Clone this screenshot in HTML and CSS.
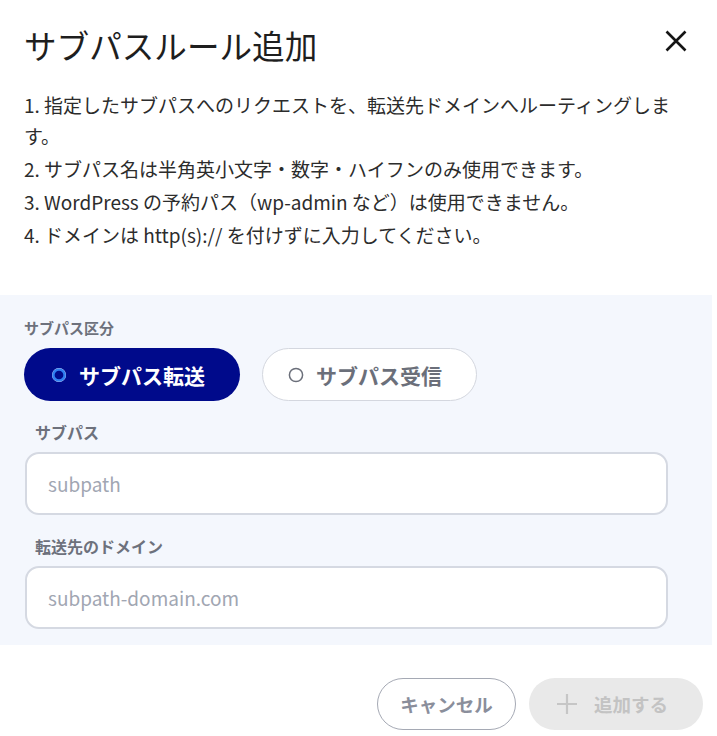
FILE: index.html
```html
<!DOCTYPE html>
<html lang="ja">
<head>
<meta charset="utf-8">
<title>サブパスルール追加</title>
<link rel="stylesheet" href="styles.css">
</head>
<body>
<div class="modal">
  <div class="header">
    <h1 class="title">サブパスルール追加</h1>
    <button class="close" aria-label="閉じる">
      <svg width="22" height="22" viewBox="0 0 22 22"><path d="M1.5 1.5 L20.5 20.5 M20.5 1.5 L1.5 20.5" stroke="#151515" stroke-width="2.6" fill="none"/></svg>
    </button>
  </div>
  <ol class="notes">
    <li>1. 指定したサブパスへのリクエストを、転送先ドメインへルーティングします。</li>
    <li>2. サブパス名は半角英小文字・数字・ハイフンのみ使用できます。</li>
    <li>3. WordPress の予約パス（wp-admin など）は使用できません。</li>
    <li>4. ドメインは http(s):// を付けずに入力してください。</li>
  </ol>
  <div class="panel">
    <div class="group-label">サブパス区分</div>
    <div class="radios">
      <div class="pill pill-on">
        <svg class="dot" width="16" height="16" viewBox="0 0 16 16"><circle cx="8" cy="8" r="7" fill="#dfe9ff"/><circle cx="8" cy="8" r="5.6" fill="#000b8c" stroke="#2f7ff0" stroke-width="2.5"/></svg>
        <span>サブパス転送</span>
      </div>
      <div class="pill pill-off">
        <svg class="dot" width="16" height="16" viewBox="0 0 16 16"><circle cx="8" cy="8" r="6.6" fill="#fff" stroke="#6b6f7a" stroke-width="1.5"/></svg>
        <span>サブパス受信</span>
      </div>
    </div>
    <div class="field">
      <div class="field-label">サブパス</div>
      <div class="input">subpath</div>
    </div>
    <div class="field">
      <div class="field-label">転送先のドメイン</div>
      <div class="input">subpath-domain.com</div>
    </div>
  </div>
  <div class="footer">
    <button class="btn btn-cancel">キャンセル</button>
    <button class="btn btn-add">
      <svg width="22" height="22" viewBox="0 0 22 22"><path d="M11 1 V21 M1 11 H21" stroke="#c6c6c6" stroke-width="2.2" fill="none"/></svg>
      <span>追加する</span>
    </button>
  </div>
</div>
</body>
</html>
```
FILE: styles.css
```css
* { box-sizing: border-box; }
html, body {
  margin: 0;
  padding: 0;
  background: #ffffff;
}
body {
  font-family: "Noto Sans CJK JP", "Noto Sans", sans-serif;
  color: #2a2a2a;
}
.modal {
  width: 717px;
}
.header {
  display: flex;
  justify-content: space-between;
  align-items: flex-start;
  padding: 21px 30px 0 24px;
}
.title {
  margin: 0;
  font-size: 32.6px;
  font-weight: 400;
  line-height: 48px;
  color: #1e1e1e;
}
.close {
  border: 0;
  background: none;
  padding: 0;
  width: 22px;
  height: 22px;
  display: flex;
  margin-top: 9px;
}
.notes {
  list-style: none;
  margin: 20px 0 0;
  padding: 0 24px;
  font-size: 19px;
  line-height: 31px;
  color: #2c2c2c;
}
.notes li {
  margin-bottom: 2px;
}
.panel {
  margin-top: 45px;
  width: 712px;
  background: #f4f7fd;
  padding: 23px 0 16px;
}
.group-label {
  margin-left: 24px;
  font-size: 15px;
  font-weight: 700;
  line-height: 20px;
  color: #6d717c;
}
.radios {
  display: flex;
  gap: 22px;
  margin: 10px 0 0 24px;
}
.pill {
  height: 53px;
  border-radius: 27px;
  display: flex;
  align-items: center;
  gap: 12px;
  font-size: 21px;
  font-weight: 700;
}
.pill-on {
  width: 216px;
  padding-left: 27px;
  background: #000a8b;
  color: #ffffff;
}
.pill-off {
  width: 215px;
  padding-left: 25px;
  background: #ffffff;
  border: 1px solid #d4d7df;
  color: #6b6f7a;
}
.dot {
  flex: none;
}
.field {
  margin-top: 21px;
}
.field-label {
  margin-left: 35px;
  font-size: 16px;
  font-weight: 700;
  line-height: 20px;
  color: #6d717c;
}
.input {
  margin: 10px 0 0 25px;
  width: 643px;
  height: 63px;
  background: #ffffff;
  border: 2px solid #d5d9e2;
  border-radius: 14px;
  padding-left: 21px;
  display: flex;
  align-items: center;
  font-size: 19px;
  color: #a1a6b2;
}
.footer {
  display: flex;
  justify-content: flex-end;
  gap: 13px;
  padding-right: 14px;
  margin-top: 33px;
}
.btn {
  height: 52px;
  border-radius: 26px;
  font-family: inherit;
  font-size: 18.5px;
  font-weight: 700;
  display: flex;
  align-items: center;
  justify-content: center;
}
.btn-cancel {
  width: 139px;
  background: #ffffff;
  border: 1px solid #a5a9b4;
  color: #8a8e9b;
}
.btn-add {
  width: 174px;
  background: #e9e9e9;
  border: 0;
  color: #c3c3c3;
  gap: 16px;
  padding-right: 14px;
}
```
